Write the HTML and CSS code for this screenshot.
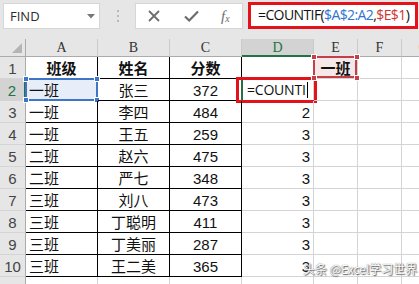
FILE: index.html
```html
<!DOCTYPE html>
<html>
<head>
<meta charset="utf-8">
<link rel="stylesheet" href="styles.css">
</head>
<body>
<div class="fbar">
  <div class="namebox"><span>FIND</span><svg class="dd" width="8" height="5" viewBox="0 0 8 5"><path d="M0 0H8L4 4.5Z" fill="#777"/></svg></div>
  <div class="dots"><i></i><i></i><i></i></div>
  <div class="btns">
    <svg class="ico" width="12" height="12" viewBox="0 0 12 12"><path d="M1 1L11 11M11 1L1 11" stroke="#6d6d6d" stroke-width="1.8"/></svg>
    <svg class="ico" width="15" height="12" viewBox="0 0 15 12"><path d="M1 6.5L5.2 10.5L14 1.5" stroke="#6d6d6d" stroke-width="2.2" fill="none"/></svg>
    <span class="fx">f<sub>x</sub></span>
  </div>
  <div class="formula">=COUNTIF(<span class="rb">$A$2:A2</span>,<span class="rr">$E$1</span>)</div>
</div>
<div class="sheet">
  <div class="ch corner"><svg width="10" height="10" viewBox="0 0 10 10"><path d="M10 0V10H0Z" fill="#b5b5b5"/></svg></div>
  <div class="ch">A</div><div class="ch">B</div><div class="ch">C</div><div class="ch act">D</div><div class="ch">E</div><div class="ch">F</div><div class="ch">G</div>

  <div class="rh">1</div><div class="c t m b">班级</div><div class="c t m b">姓名</div><div class="c t m b">分数</div><div class="c"></div><div class="c e1 b"><span>一班</span><i class="h h1"></i><i class="h h2"></i><i class="h h3"></i><i class="h h4"></i></div><div class="c"></div><div class="c"></div>

  <div class="rh ract">2</div><div class="c t l a2">一班<i class="sel"></i><i class="hb hb1"></i><i class="hb hb2"></i><i class="hb hb3"></i><i class="hb hb4"></i></div><div class="c t m">张三</div><div class="c t m n">372</div><div class="c d2"><span class="edit">=COUNTI</span><i class="caret"></i><i class="gbar"></i><i class="redbox"></i></div><div class="c"></div><div class="c"></div><div class="c"></div>

  <div class="rh">3</div><div class="c t l">一班</div><div class="c t m">李四</div><div class="c t m n">484</div><div class="c r n">2</div><div class="c"></div><div class="c"></div><div class="c"></div>
  <div class="rh">4</div><div class="c t l">一班</div><div class="c t m">王五</div><div class="c t m n">259</div><div class="c r n">3</div><div class="c"></div><div class="c"></div><div class="c"></div>
  <div class="rh">5</div><div class="c t l">二班</div><div class="c t m">赵六</div><div class="c t m n">475</div><div class="c r n">3</div><div class="c"></div><div class="c"></div><div class="c"></div>
  <div class="rh">6</div><div class="c t l">二班</div><div class="c t m">严七</div><div class="c t m n">348</div><div class="c r n">3</div><div class="c"></div><div class="c"></div><div class="c"></div>
  <div class="rh">7</div><div class="c t l">三班</div><div class="c t m">刘八</div><div class="c t m n">473</div><div class="c r n">3</div><div class="c"></div><div class="c"></div><div class="c"></div>
  <div class="rh">8</div><div class="c t l">三班</div><div class="c t m">丁聪明</div><div class="c t m n">411</div><div class="c r n">3</div><div class="c"></div><div class="c"></div><div class="c"></div>
  <div class="rh">9</div><div class="c t l">三班</div><div class="c t m">丁美丽</div><div class="c t m n">287</div><div class="c r n">3</div><div class="c"></div><div class="c"></div><div class="c"></div>
  <div class="rh">10</div><div class="c t l">三班</div><div class="c t m">王二美</div><div class="c t m n">365</div><div class="c r n">3</div><div class="c"></div><div class="c"></div><div class="c"></div>
  <div class="rh"></div><div class="c"></div><div class="c"></div><div class="c"></div><div class="c"></div><div class="c"></div><div class="c"></div><div class="c"></div>
</div>
<div class="wm">头条 @Excel学习世界</div>
</body>
</html>
```
FILE: styles.css
```css
* { box-sizing: border-box; }
body {
  margin: 0;
  width: 419px;
  height: 284px;
  overflow: hidden;
  background: #fff;
  font-family: "Liberation Sans", "Noto Sans CJK SC", sans-serif;
  position: relative;
}
.fbar {
  height: 39px;
  background: #e6e6e6;
  display: flex;
  align-items: flex-start;
}
.namebox {
  margin: 3px 0 0 3px;
  width: 97px;
  height: 26px;
  background: #fff;
  border: 1px solid #d6d6d6;
  display: flex;
  align-items: center;
  justify-content: space-between;
  padding: 0 4px 0 6px;
  font-family: "Open Sans", "Liberation Sans", sans-serif;
  font-size: 13px;
  color: #2a2a2a;
}
.dd { margin-top: 1px; }
.dots {
  width: 35px;
  height: 32px;
  display: flex;
  flex-direction: column;
  align-items: center;
  justify-content: center;
  gap: 3px;
}
.dots i { display: block; width: 2px; height: 2px; background: #b9b9b9; }
.btns {
  margin-top: 3px;
  width: 108px;
  height: 26px;
  background: #fff;
  border: 1px solid #d6d6d6;
  display: flex;
  align-items: center;
  padding-left: 12px;
}
.ico { margin-right: 24px; }
.btns .ico:nth-child(2) { margin-right: 22px; }
.fx {
  font-family: "Liberation Serif", serif;
  font-style: italic;
  font-size: 15px;
  color: #6d6d6d;
}
.fx sub { font-size: 10px; vertical-align: -1px; }
.formula {
  margin: 2px 1px 0 5px;
  flex: 1;
  height: 27px;
  border: 3px solid #e3121b;
  background: #fff;
  padding-left: 7px;
  font-family: "Open Sans", "Liberation Sans", sans-serif;
  font-size: 14px;
  letter-spacing: -0.6px;
  line-height: 20px;
  color: #111;
  white-space: nowrap;
  overflow: hidden;
}
.rb { color: #2f74d0; }
.rr { color: #d0352f; }

.sheet {
  display: grid;
  grid-template-columns: 26px 72px 72px 72px 72px 44px 44px 44px;
  grid-template-rows: 18px repeat(11, 22px);
  width: 446px;
}
.ch {
  background: #e6e6e6;
  border-right: 1px solid #cacaca;
  border-bottom: 1px solid #ababab;
  font-family: "Liberation Serif", serif;
  font-size: 14px;
  color: #333;
  display: flex;
  align-items: center;
  justify-content: center;
  padding-top: 1px;
}
.corner { justify-content: flex-end; align-items: flex-end; padding: 0 3px 3px 0; border-right-color: #ababab; }
.ch.act { background: #d3d3d3; color: #217346; border-bottom: 2px solid #217346; }
.rh {
  background: #e6e6e6;
  border-right: 1px solid #ababab;
  border-bottom: 1px solid #d4d4d4;
  font-size: 15px;
  color: #444;
  display: flex;
  align-items: center;
  justify-content: center;
  padding-top: 2px;
}
.rh.ract { background: #d3d3d3; color: #217346; border-right: 2px solid #217346; }
.c {
  border-right: 1px solid #d4d4d4;
  border-bottom: 1px solid #d4d4d4;
  font-family: "Liberation Sans", "Noto Sans CJK SC", sans-serif;
  font-size: 15px;
  color: #111;
  display: flex;
  align-items: center;
  white-space: nowrap;
  position: relative;
}
.c.t { border-right-color: #000; border-bottom-color: #000; }
.c.l { padding-left: 3px; }
.c.m { justify-content: center; }
.c.r { justify-content: flex-end; padding-right: 3px; }
.c.b { font-weight: bold; }
.c.n { padding-top: 1px; }

.a2 { background: #e8eef9; }
.sel {
  position: absolute;
  left: -1px; top: -1px; right: -1px; bottom: -1px;
  border: 2px solid #3f74c6;
}
.hb {
  position: absolute;
  width: 6px; height: 6px;
  background: #3f74c6;
  border: 1px solid #fff;
}
.hb1 { left: -3px; top: -3px; }
.hb2 { right: -3px; top: -3px; }
.hb3 { left: -3px; bottom: -3px; }
.hb4 { right: -3px; bottom: -3px; }

.e1 { background: #f6e8e8; justify-content: center; }
.e1::after {
  content: "";
  position: absolute;
  left: -1px; top: -1px; right: 0; bottom: 0;
  border: 2px solid #c2404a;
}
.e1 span { position: relative; z-index: 1; }
.h {
  position: absolute;
  width: 6px; height: 6px;
  background: #c2404a;
  border: 1px solid #fff;
  z-index: 2;
}
.h1 { left: -3px; top: -3px; }
.h2 { right: -3px; top: -3px; }
.h3 { left: -3px; bottom: -3px; }
.h4 { right: -3px; bottom: -3px; }

.d2 { padding-left: 5px; }
.edit {
  font-family: "Open Sans", "Liberation Sans", sans-serif;
  font-size: 14px;
  letter-spacing: -0.2px;
}
.caret { display: block; width: 1px; height: 16px; background: #000; margin-left: 1px; }
.gbar {
  position: absolute;
  left: -1px; top: 0; bottom: 0;
  width: 2px;
  background: #217346;
}
.redbox {
  position: absolute;
  left: -6px; top: -2px; right: -4px; bottom: -3px;
  border: 3px solid #e3121b;
}
.wm {
  position: absolute;
  left: 303px;
  top: 262px;
  font-family: "Noto Sans CJK SC", sans-serif;
  font-size: 12px;
  line-height: 14px;
  color: #fff;
  text-shadow: 0 0 1px #555, 1px 1px 1px #666;
}
```
